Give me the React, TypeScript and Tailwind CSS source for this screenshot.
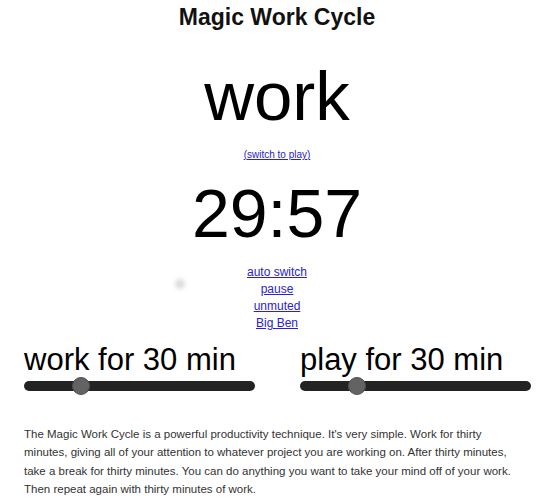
import React from "react";

type SliderProps = { label: string; value: number; min: number; max: number };

function DurationSlider({ label, value, min, max }: SliderProps) {
  const pct = (value - min) / (max - min);
  return (
    <div className="flex flex-col">
      <div className="text-[31px] leading-[34px] text-black whitespace-nowrap">{label}</div>
      <div className="relative w-[231px] h-[18px] flex items-center">
        <div className="w-full h-[10px] rounded-full bg-[#232323]" />
        <div
          className="absolute top-0 w-[18px] h-[18px] rounded-full bg-[#636363] border border-[#505050]"
          style={{ left: `${pct * (231 - 18)}px` }}
        />
      </div>
    </div>
  );
}

export default function App() {
  const links = ["auto switch", "pause", "unmuted", "Big Ben"];
  return (
    <div className="relative w-[542px] h-[500px] overflow-hidden bg-white font-['Liberation_Sans',Arial,sans-serif]">
      <div className="w-[554px] flex flex-col">
        <h1 className="pt-[3px] text-center text-[23px] leading-[28px] font-bold text-[#111]">
          Magic Work Cycle
        </h1>
        <div className="mt-[26px] text-center text-[69px] leading-[80px] text-black">work</div>
        <div className="mt-[11px] text-center text-[10px] leading-[14px]">
          <a href="#" className="text-[#2a22cc] underline">
            (switch to play)
          </a>
        </div>
        <div className="mt-[11px] text-center text-[68px] leading-[80px] text-black">29:57</div>
        <div className="mt-[11px] flex flex-col items-center text-[12px] leading-[17px]">
          {links.map((l) => (
            <a key={l} href="#" className="text-[#2a22cc] underline">
              {l}
            </a>
          ))}
        </div>
        <div className="mt-[11px] grid grid-cols-2">
          <div className="pl-[24px]">
            <DurationSlider label="work for 30 min" value={31} min={5} max={120} />
          </div>
          <div className="pl-[23px]">
            <DurationSlider label="play for 30 min" value={31} min={5} max={120} />
          </div>
        </div>
        <p className="mt-[30px] ml-[24px] w-[496px] text-[11.5px] leading-[18.33px] text-[#333]">
          The Magic Work Cycle is a powerful productivity technique. It's very simple. Work for thirty
          minutes, giving all of your attention to whatever project you are working on. After thirty
          minutes, take a break for thirty minutes. You can do anything you want to take your mind off
          of your work. Then repeat again with thirty minutes of work.
        </p>
      </div>
      <div className="absolute left-[175px] top-[279px] w-[10px] h-[10px] rounded-full bg-[#dcdcdc] blur-[2px]" />
    </div>
  );
}
